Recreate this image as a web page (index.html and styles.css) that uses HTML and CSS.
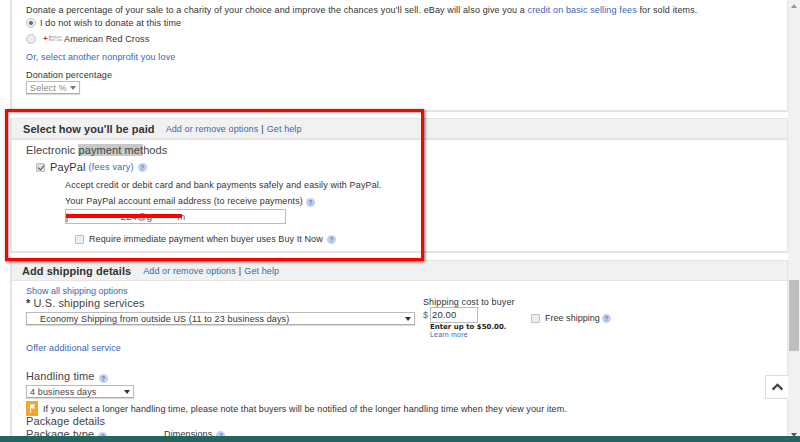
FILE: index.html
```html
<!DOCTYPE html>
<html lang="en">
<head>
<meta charset="utf-8">
<title>Sell your item</title>
<link rel="stylesheet" href="styles.css">
</head>
<body>
<main class="page">
  <section class="panel panel-charity">
    <p class="intro">Donate a percentage of your sale to a charity of your choice and improve the chances you'll sell. eBay will also give you a <a href="#">credit on basic selling fees</a> for sold items.</p>
    <label class="radio-row"><span class="radio radio-on"></span>I do not wish to donate at this time</label>
    <label class="radio-row radio-row-2"><span class="radio"></span><span class="charity-logo"><i>+</i><b>American<br>Red Cross</b></span>American Red Cross</label>
    <a class="nonprofit" href="#">Or, select another nonprofit you love</a>
    <div class="small-label">Donation percentage</div>
    <div class="select select-pct">Select %<span class="caret"></span></div>
  </section>

  <section class="panel panel-paid">
    <header class="panel-head"><h2>Select how you'll be paid</h2><a href="#">Add or remove options</a><span class="sep">|</span><a href="#">Get help</a></header>
    <div class="paid-body">
      <h3 class="sub">Electronic <mark>payment met</mark>hods</h3>
      <div class="paypal-row"><span class="check check-on"></span><span class="paypal-name">PayPal</span><a class="fees" href="#">(fees vary)</a><span class="help"></span></div>
      <p class="paypal-desc">Accept credit or debit card and bank payments safely and easily with PayPal.</p>
      <div class="paypal-email">Your PayPal account email address (to receive payments)<span class="help"></span></div>
      <div class="email-input">j&nbsp;&nbsp;&nbsp;&nbsp;&nbsp;&nbsp;&nbsp;&nbsp;&nbsp;&nbsp;&nbsp;&nbsp;&nbsp;&nbsp;&nbsp;&nbsp;&nbsp;&nbsp;&nbsp;224@g&nbsp;&nbsp;&nbsp;&nbsp;&nbsp;&nbsp;&nbsp;&nbsp;&nbsp;m<span class="scribble"></span></div>
      <div class="immediate"><span class="check"></span>Require immediate payment when buyer uses Buy It Now<span class="help"></span></div>
    </div>
  </section>

  <section class="panel panel-ship">
    <header class="panel-head head-ship"><h2>Add shipping details</h2><a href="#">Add or remove options</a><span class="sep">|</span><a href="#">Get help</a></header>
    <div class="ship-body">
      <a class="show-all" href="#">Show all shipping options</a>
      <div class="ship-grid">
        <div class="ship-left">
          <div class="sub us"><span class="star">*</span> U.S. shipping services</div>
          <div class="select select-ship">Economy Shipping from outside US (11 to 23 business days)<span class="caret"></span></div>
        </div>
        <div class="ship-cost">
          <div class="cost-label">Shipping cost to buyer</div>
          <div class="cost-row"><span class="dollar">$</span><span class="cost-input">20.00</span></div>
          <div class="cost-limit">Enter up to $50.00.</div>
          <a class="cost-more" href="#">Learn more</a>
        </div>
        <div class="free"><span class="check check-large"></span>Free shipping<span class="help"></span></div>
      </div>
      <a class="offer" href="#">Offer additional service</a>
      <div class="sub handling">Handling time<span class="help"></span></div>
      <div class="select select-days">4 business days<span class="caret"></span></div>
      <div class="notice"><span class="flag"><svg viewBox="0 0 12 15" width="12" height="15"><path d="M4 3.5h5L8 5.5l1 2H5V12H4z" fill="#fff"/></svg></span>If you select a longer handling time, please note that buyers will be notified of the longer handling time when they view your item.</div>
      <div class="sub pkg">Package details</div>
      <div class="pkg-row"><span class="pkg-type"><span class="pkg-name">Package type</span><span class="help"></span></span><span>Dimensions<span class="help"></span></span></div>
    </div>
  </section>
</main>

<div class="scrollbar"><span class="arrow-up"></span><span class="thumb"></span><span class="arrow-down"></span></div>
<a class="to-top" href="#" aria-label="Back to top"><svg viewBox="0 0 14 9" width="13" height="8"><path d="M1.5 7.5 7 2l5.5 5.5" fill="none" stroke="#444" stroke-width="2.6"/></svg></a>
<div class="annotation"></div>
<div class="taskbar"></div>
</body>
</html>
```
FILE: styles.css
```css
* { box-sizing: border-box; }
html, body { margin: 0; height: 442px; overflow: hidden; }
body {
  background: #fff;
  color: #333;
  font: 9px/12px "Liberation Sans", Arial, sans-serif;
  letter-spacing: .13px;
}
a { color: #3a66b0; text-decoration: none; }
p, h2, h3 { margin: 0; }

.page { width: 778px; margin-left: 10px; }
.panel { border-right: 1px solid #e4e4e4; border-left: 2px solid #e4e4e4; }
.panel-charity { height: 112px; padding: 4px 0 0 14px; border-bottom: 2px solid #e4e4e4; }
.intro { white-space: nowrap; }
.radio-row { display: flex; align-items: center; height: 14px; }
.radio-row-2 { height: 18px; }
.radio { width: 10px; height: 10px; border-radius: 50%; border: 1px solid #c4c4c4; background: #eee; margin-right: 4px; flex: none; position: relative; }
.radio-on::after { content: ""; position: absolute; inset: 2px; border-radius: 50%; background: #666; }
.charity-logo { display: inline-flex; align-items: center; width: 21px; margin-left: 3px; font-size: 3px; line-height: 3.5px; letter-spacing: 0; color: #888; white-space: nowrap; overflow: hidden; }
.charity-logo i { color: #d22; font-style: normal; font-weight: bold; font-size: 8px; line-height: 8px; margin-right: 1px; }
.charity-logo b { font-weight: normal; }
.nonprofit { display: block; margin-top: 3px; }
.small-label { margin-top: 6px; }
.select { display: flex; align-items: center; background: #fff; border: 1px solid #bbb; border-bottom-color: #aaa; box-shadow: 0 1px 1px #ddd; white-space: nowrap; }
.select-pct { width: 54px; height: 13px; padding-left: 3px; color: #888; }
.caret { width: 0; height: 0; margin-left: auto; margin-right: 3px; border-left: 3px solid transparent; border-right: 3px solid transparent; border-top: 4px solid #333; }
.select-pct .caret { border-top-color: #777; }

.panel-paid { margin-top: 6px; height: 135px; border-top: 1px solid #e4e4e4; border-bottom: 2px solid #e4e4e4; }
.panel-head { display: flex; align-items: center; height: 21px; background: #f1f1f1; border-bottom: 2px solid #e4e4e4; padding-left: 11px; gap: 3px; letter-spacing: .1px; }
.panel-head h2 { font-size: 11px; font-weight: bold; color: #333; margin-right: 8px; letter-spacing: .05px; }
.paid-body { padding: 3px 0 0 14px; }
.sub { font-size: 11px; line-height: 14px; font-weight: normal; color: #444; letter-spacing: .1px; }
mark { background: #c8c8c8; color: inherit; }
.paypal-row { display: flex; align-items: center; height: 14px; margin: 3px 0 0 10px; }
.check { display: inline-block; flex: none; width: 9px; height: 9px; border: 1px solid #c0c0c0; background: #eee; border-radius: 1px; }
.check-on { background: #ddd; position: relative; margin-right: 5px; }
.check-on::after { content: ""; position: absolute; left: 2px; top: 0; width: 3px; height: 5px; border: solid #555; border-width: 0 1.4px 1.4px 0; transform: rotate(40deg); }
.paypal-name { font-size: 11px; margin-right: 3px; letter-spacing: .1px; }
.fees { font-size: 9px; letter-spacing: .25px; }
.help { display: inline-flex; align-items: center; justify-content: center; flex: none; width: 9px; height: 9px; margin-left: 4px; border-radius: 50%; background: #c3d1ee; vertical-align: -1px; }
.help::after { content: "?"; font-size: 7px; line-height: 9px; color: #5b7dbd; font-weight: bold; letter-spacing: 0; }
.paypal-desc { margin: 5px 0 0 39px; white-space: nowrap; }
.paypal-email { margin: 4px 0 0 39px; white-space: nowrap; }
.paypal-email .help { margin-left: 3px; }
.email-input { position: relative; width: 221px; height: 15px; margin: 2px 0 0 39px; border: 1px solid #bbb; background: #fff; line-height: 13px; font-size: 9.5px; color: #555; white-space: nowrap; overflow: hidden; }
.scribble { position: absolute; left: 0; top: 4px; width: 116px; height: 4px; background: #f00; }
.immediate { display: flex; align-items: center; margin: 9px 0 0 49px; height: 12px; white-space: nowrap; letter-spacing: .09px; }
.immediate .check { margin-right: 5px; }

.panel-ship { margin-top: 7px; border-top: 1px solid #e4e4e4; height: 190px; }
.head-ship { height: 20px; border-bottom-width: 1px; padding-left: 10px; }
.head-ship h2 { margin-right: 9px; }
.ship-body { padding: 4px 0 0 14px; }
.show-all { display: block; letter-spacing: 0; }
.ship-grid { display: flex; align-items: flex-start; height: 42px; }
.ship-left { width: 390px; margin-right: 7px; flex: none; }
.us { line-height: 12px; }
.star { font-weight: bold; color: #235; }
.select-ship { width: 389px; height: 13px; margin-top: 3px; padding-left: 13px; }
.ship-cost { width: 108px; flex: none; margin-top: -1px; }
.cost-label { white-space: nowrap; letter-spacing: .12px; }
.cost-row { display: flex; align-items: center; margin-top: -1px; }
.dollar { width: 7px; color: #666; }
.cost-input { width: 48px; height: 16px; border: 1px solid #bbb; padding-left: 1px; line-height: 14px; font-size: 9.5px; letter-spacing: .1px; }
.cost-limit { font-family: "DejaVu Sans", sans-serif; font-size: 7px; font-weight: bold; line-height: 9px; margin-left: 7px; color: #222; white-space: nowrap; letter-spacing: 0; }
.cost-more { display: block; font-size: 7px; line-height: 8px; margin-left: 7px; margin-top: -1px; letter-spacing: .2px; }
.free { display: flex; align-items: center; margin-top: 15px; letter-spacing: .02px; }
.free .help { margin-left: 2px; }
.check-large { margin-right: 5px; }
.offer { display: block; margin-top: 3px; }
.handling { margin-top: 15px; }
.select-days { width: 108px; height: 13px; margin-top: 2px; padding-left: 3px; color: #444; }
.notice { display: flex; align-items: center; height: 15px; margin-top: 3px; letter-spacing: .095px; white-space: nowrap; }
.flag { display: flex; width: 12px; height: 15px; margin-right: 5px; background: #f5a623; }
.pkg { margin-top: -2px; }
.pkg-row { display: flex; }
.pkg-type { width: 138px; }
.pkg-name { font-size: 11px; color: #444; }

.scrollbar { position: fixed; right: 0; top: 0; width: 12px; height: 442px; background: #f1f1f1; }
.arrow-up { position: absolute; left: 3px; top: 4px; border-left: 3px solid transparent; border-right: 3px solid transparent; border-bottom: 4px solid #999; }
.arrow-down { position: absolute; left: 3px; top: 433px; border-left: 3px solid transparent; border-right: 3px solid transparent; border-top: 4px solid #555; }
.thumb { position: absolute; left: 1px; top: 280px; width: 10px; height: 71px; background: #bfbdbf; }
.to-top { position: fixed; left: 765px; top: 375px; width: 23px; height: 24px; display: flex; align-items: center; justify-content: center; background: #fff; border: 1px solid #ddd; border-right: 0; }
.annotation { position: fixed; left: 5px; top: 109px; width: 419px; height: 152px; border: 3px solid #f00; box-shadow: 1px 1px 3px rgba(0,0,0,.6), inset 1px 1px 2px rgba(0,0,0,.35); }
.taskbar { position: fixed; left: 0; top: 436px; width: 800px; height: 6px; background: #256560; }
```
